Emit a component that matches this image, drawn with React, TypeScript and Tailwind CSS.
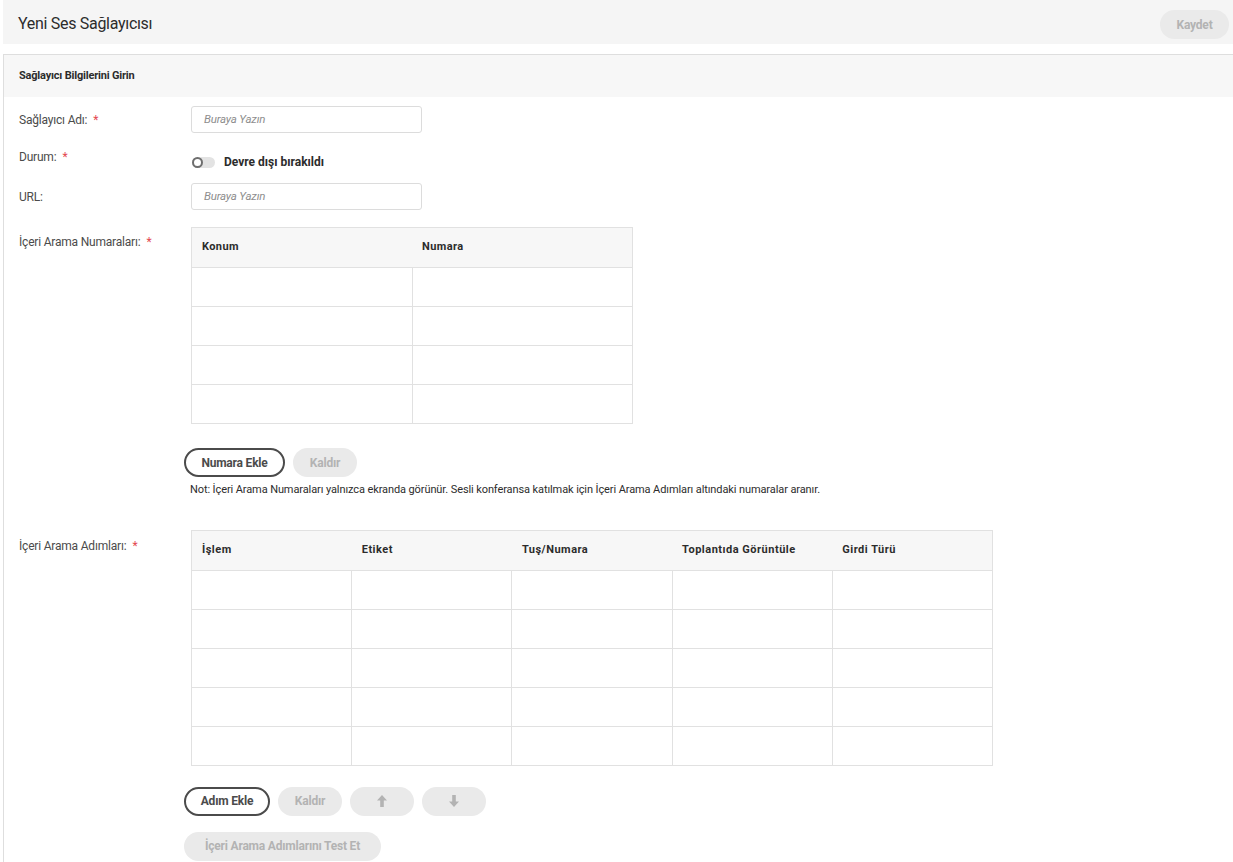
import React from 'react';

const font = { fontFamily: 'Roboto, "Open Sans", sans-serif' };

function Label({ text, required }: { text: string; required?: boolean }) {
  return (
    <div className="w-[172px] shrink-0 text-[12px] text-[#4b4b4b] tracking-[-0.2px]">
      {text}
      {required && <span className="ml-[6px] text-[#e34850]">*</span>}
    </div>
  );
}

function TextInput() {
  return (
    <div className="w-[231px] h-[27px] rounded-[3px] border border-[#dcdcdc] bg-white flex items-center px-[12px] text-[11.5px] italic text-[#8e8e8e] tracking-[-0.2px]">
      Buraya Yazın
    </div>
  );
}

function GridTable({ cols, rows, width, headerStyle }: { cols: string[]; rows: number; width: string; headerStyle: string }) {
  return (
    <table className={`${width} table-fixed border-collapse border border-[#e1e1e1]`}>
      <thead>
        <tr className="bg-[#f7f7f7] h-[40px]">
          {cols.map((c) => (
            <th key={c} className={`text-left px-[10px] ${headerStyle}`}>
              {c}
            </th>
          ))}
        </tr>
      </thead>
      <tbody>
        {Array.from({ length: rows }).map((_, i) => (
          <tr key={i} className="h-[39px]">
            {cols.map((c) => (
              <td key={c} className="border border-[#e1e1e1]"></td>
            ))}
          </tr>
        ))}
      </tbody>
    </table>
  );
}

function OutlineButton({ children, w }: { children: React.ReactNode; w: string }) {
  return (
    <button className={`h-[29px] ${w} rounded-full border-2 border-[#4b4b4b] bg-white text-[12px] font-bold text-[#4b4b4b] tracking-[-0.2px]`}>
      {children}
    </button>
  );
}

function DisabledButton({ children, w }: { children: React.ReactNode; w: string }) {
  return (
    <button className={`h-[29px] ${w} rounded-full bg-[#eaeaea] text-[12px] font-bold text-[#b3b3b3] tracking-[-0.2px] flex items-center justify-center`}>
      {children}
    </button>
  );
}

function Arrow({ up }: { up?: boolean }) {
  return (
    <svg width="10" height="12" viewBox="0 0 10 12" className={up ? '' : 'rotate-180'}>
      <path d="M5 0 L10 5.5 L6.8 5.5 L6.8 12 L3.2 12 L3.2 5.5 L0 5.5 Z" fill="#b3b3b3" />
    </svg>
  );
}

export default function App() {
  return (
    <div className="min-h-screen bg-white" style={font}>
      {/* Header */}
      <div className="ml-[3px] h-[44px] bg-[#f5f5f5] flex items-start justify-between pl-[15px] pr-[4px]">
        <h1 className="mt-[12px] text-[16px] text-[#2c2c2c] tracking-[-0.3px]">Yeni Ses Sağlayıcısı</h1>
        <div className="mt-[10px]">
          <DisabledButton w="w-[69px]">Kaydet</DisabledButton>
        </div>
      </div>

      {/* Card */}
      <div className="mt-[10px] ml-[3px] border-t border-l border-[#dedede]">
        <div className="h-[42px] bg-[#f7f7f7] flex items-center pl-[15px] text-[11px] font-bold text-[#2c2c2c] tracking-[-0.2px]">
          Sağlayıcı Bilgilerini Girin
        </div>

        <div className="pl-[15px] pt-[9px] pb-[10px]">
          <div className="flex items-center">
            <Label text="Sağlayıcı Adı:" required />
            <TextInput />
          </div>

          <div className="flex items-start mt-[15px] h-[28px]">
            <Label text="Durum:" required />
            <div className="flex items-center mt-[5px] ml-[1px]">
              <div className="relative w-[23px] h-[11px] rounded-full bg-[#e3e3e3]">
                <div className="absolute left-0 top-0 w-[11px] h-[11px] rounded-full border-2 border-[#6e6e6e] bg-white"></div>
              </div>
              <span className="ml-[9px] text-[12px] font-bold text-[#2c2c2c]">Devre dışı bırakıldı</span>
            </div>
          </div>

          <div className="flex items-center mt-[7px]">
            <Label text="URL:" />
            <TextInput />
          </div>

          <div className="flex items-start mt-[17px]">
            <div className="pt-[6px]">
              <Label text="İçeri Arama Numaraları:" required />
            </div>
            <GridTable
              cols={['Konum', 'Numara']}
              rows={4}
              width="w-[442px]"
              headerStyle="text-[11px] font-bold text-[#2c2c2c] tracking-[0.4px]"
            />
          </div>

          <div className="ml-[165px] mt-[24px] flex gap-[8px]">
            <OutlineButton w="w-[101px]">Numara Ekle</OutlineButton>
            <DisabledButton w="w-[64px]">Kaldır</DisabledButton>
          </div>
          <p className="ml-[171px] mt-[5px] text-[11px] text-[#2c2c2c] tracking-[-0.1px]">
            Not: İçeri Arama Numaraları yalnızca ekranda görünür. Sesli konferansa katılmak için İçeri Arama Adımları altındaki numaralar aranır.
          </p>

          <div className="flex items-start mt-[31px]">
            <div className="pt-[7px]">
              <Label text="İçeri Arama Adımları:" required />
            </div>
            <GridTable
              cols={['İşlem', 'Etiket', 'Tuş/Numara', 'Toplantıda Görüntüle', 'Girdi Türü']}
              rows={5}
              width="w-[802px]"
              headerStyle="text-[11px] font-bold text-[#2c2c2c] tracking-[0.5px]"
            />
          </div>

          <div className="ml-[165px] mt-[21px] flex gap-[8px]">
            <OutlineButton w="w-[86px]">Adım Ekle</OutlineButton>
            <DisabledButton w="w-[64px]">Kaldır</DisabledButton>
            <DisabledButton w="w-[64px]">
              <Arrow up />
            </DisabledButton>
            <DisabledButton w="w-[64px]">
              <Arrow />
            </DisabledButton>
          </div>
          <div className="ml-[165px] mt-[16px] flex">
            <DisabledButton w="w-[197px]">İçeri Arama Adımlarını Test Et</DisabledButton>
          </div>
        </div>
      </div>
    </div>
  );
}
